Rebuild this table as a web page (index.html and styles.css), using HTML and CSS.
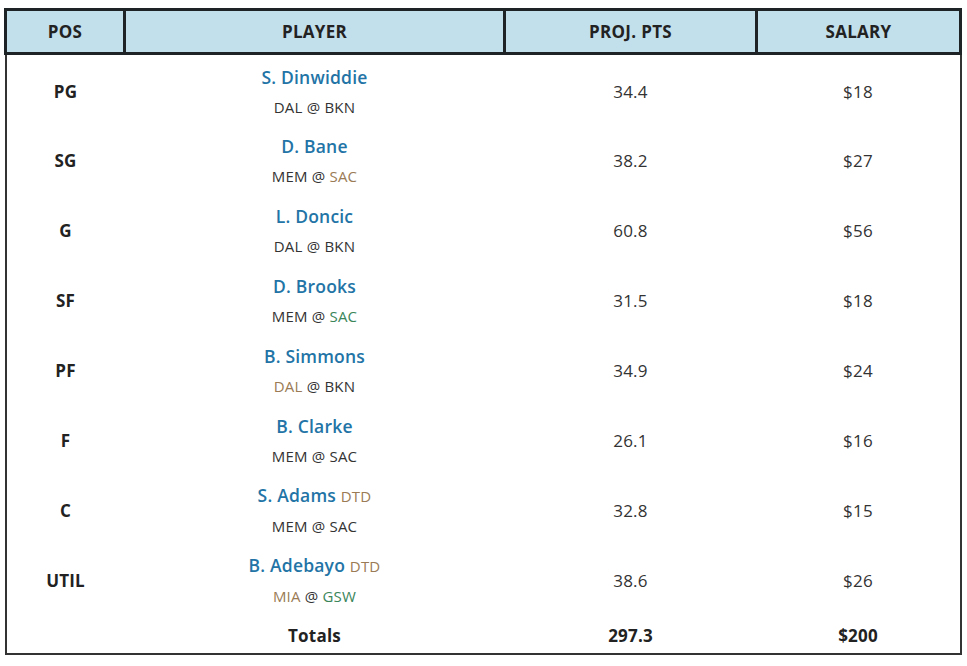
FILE: index.html
```html
<!DOCTYPE html>
<html>
<head>
<meta charset="utf-8">
<link rel="stylesheet" href="styles.css">
</head>
<body>
<table class="lineup">
  <colgroup>
    <col class="c-pos"><col class="c-player"><col class="c-proj"><col class="c-sal">
  </colgroup>
  <thead>
    <tr><th>POS</th><th>PLAYER</th><th>PROJ. PTS</th><th>SALARY</th></tr>
  </thead>
  <tbody>
    <tr class="first">
      <td class="pos">PG</td>
      <td class="player"><div class="name">S. Dinwiddie</div><div class="match">DAL @ BKN</div></td>
      <td>34.4</td><td>$18</td>
    </tr>
    <tr>
      <td class="pos">SG</td>
      <td class="player"><div class="name">D. Bane</div><div class="match">MEM @ <span class="brown">SAC</span></div></td>
      <td>38.2</td><td>$27</td>
    </tr>
    <tr>
      <td class="pos">G</td>
      <td class="player"><div class="name">L. Doncic</div><div class="match">DAL @ BKN</div></td>
      <td>60.8</td><td>$56</td>
    </tr>
    <tr>
      <td class="pos">SF</td>
      <td class="player"><div class="name">D. Brooks</div><div class="match">MEM @ <span class="green">SAC</span></div></td>
      <td>31.5</td><td>$18</td>
    </tr>
    <tr>
      <td class="pos">PF</td>
      <td class="player"><div class="name">B. Simmons</div><div class="match"><span class="brown">DAL</span> @ BKN</div></td>
      <td>34.9</td><td>$24</td>
    </tr>
    <tr>
      <td class="pos">F</td>
      <td class="player"><div class="name">B. Clarke</div><div class="match">MEM @ SAC</div></td>
      <td>26.1</td><td>$16</td>
    </tr>
    <tr>
      <td class="pos">C</td>
      <td class="player"><div class="name">S. Adams <span class="tag">DTD</span></div><div class="match">MEM @ SAC</div></td>
      <td>32.8</td><td>$15</td>
    </tr>
    <tr>
      <td class="pos">UTIL</td>
      <td class="player"><div class="name">B. Adebayo <span class="tag">DTD</span></div><div class="match"><span class="brown">MIA</span> @ <span class="green">GSW</span></div></td>
      <td>38.6</td><td>$26</td>
    </tr>
    <tr class="totals">
      <td></td><td>Totals</td><td>297.3</td><td>$200</td>
    </tr>
  </tbody>
</table>
</body>
</html>
```
FILE: styles.css
```css
html, body {
  margin: 0;
  padding: 0;
  background: #fff;
}
body {
  padding: 8px 0 0 4px;
  font-family: "Open Sans", "Liberation Sans", sans-serif;
  color: #333;
}
.lineup {
  width: 958px;
  border-collapse: collapse;
  border-left: 2px solid #333;
  border-right: 2px solid #333;
  border-bottom: 2px solid #333;
}
.c-pos { width: 119px; }
.c-player { width: 380px; }
.c-proj { width: 252px; }
.c-sal { width: auto; }
.lineup th {
  background: #c2dfec;
  border: 3px solid #1e2326;
  height: 40px;
  padding: 1px 0 0;
  font-size: 17px;
  font-weight: 700;
  color: #222;
  text-align: center;
  letter-spacing: 0.3px;
  line-height: 22px;
}
.lineup td {
  height: 70px;
  padding: 0;
  text-align: center;
  font-size: 17px;
  color: #333;
  vertical-align: middle;
  letter-spacing: 0.2px;
}
.lineup tr.first td {
  height: 68px;
  padding-top: 2px;
}
.lineup td.pos {
  font-weight: 700;
  color: #222;
}
.name {
  font-size: 17.5px;
  font-weight: 600;
  color: #2374a6;
  line-height: 22px;
}
.match {
  font-size: 15px;
  color: #333;
  line-height: 20px;
  margin-top: 9px;
}
.tag {
  font-size: 15px;
  font-weight: 400;
  color: #9a7b55;
}
.brown { color: #9a7b55; }
.green { color: #3a8559; }
.lineup .totals td {
  height: 36px;
  padding-top: 2px;
  font-weight: 700;
  color: #222;
  vertical-align: middle;
}
```
